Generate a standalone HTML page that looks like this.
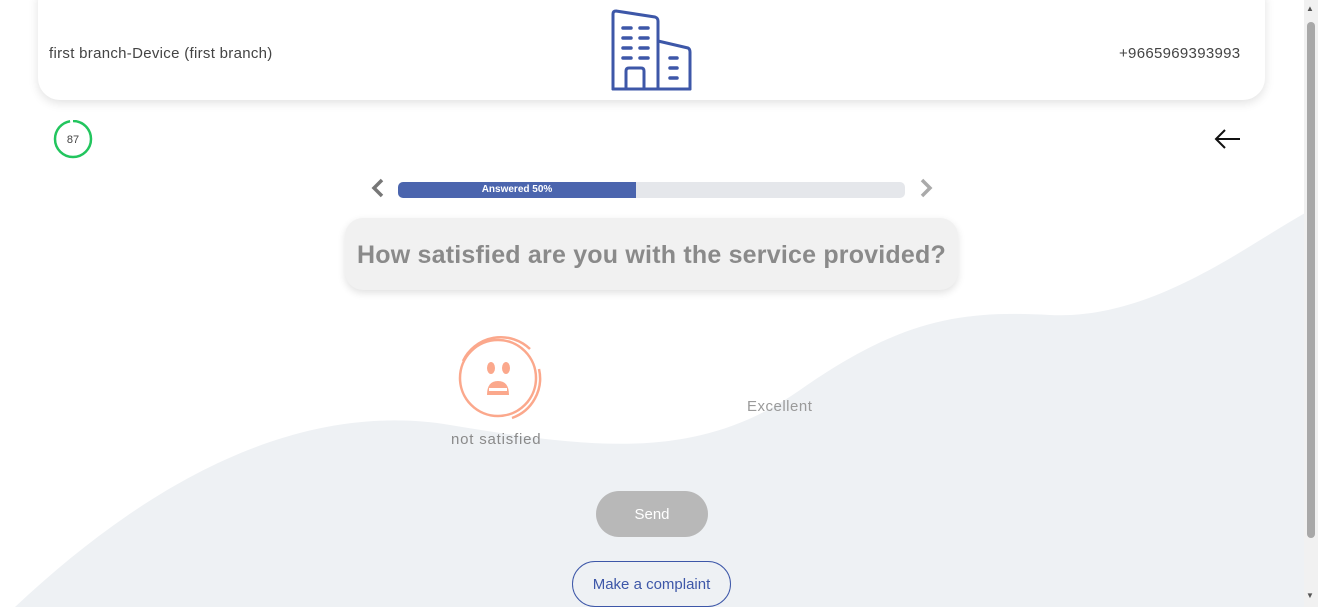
<!DOCTYPE html>
<html><head><style>
body{margin:0;width:1318px;height:607px;overflow:hidden;background:#fff;font-family:"Liberation Sans",sans-serif;position:relative}
.abs{position:absolute}
</style></head><body>
<svg class="abs" style="left:0;top:0" width="1305" height="607">
<path d="M15,607 C150,480 300,400 450,425 C600,450 700,460 800,390 C900,320 960,310 1050,315 C1150,320 1240,250 1305,213 L1305,607 Z" fill="#eef1f4"/>
</svg>
<div class="abs" style="left:38px;top:-20px;width:1227px;height:120px;background:#fff;border-radius:22px;box-shadow:0 3px 10px rgba(0,0,0,.12)"></div>
<div class="abs" style="left:49px;top:45px;font-size:15px;color:#444;letter-spacing:0.3px">first branch-Device (first branch)</div>
<div class="abs" style="left:1119px;top:45px;font-size:15px;color:#444;letter-spacing:0.3px">+9665969393993</div>
<svg class="abs" style="left:0;top:0" width="700" height="100" fill="none" stroke="#3d57a8" stroke-width="3" stroke-linecap="round" stroke-linejoin="round">
<path d="M613,89 V14 Q613,11 616,11 L655,17 Q658,18 658,21 V89"/>
<path d="M658,41 L688,48 Q690,49 690,52 V89"/>
<path d="M613,89 H690"/>
<path d="M626,89 V71 Q626,68 629,68 H641 Q644,68 644,71 V89"/>
<path d="M623,28h8M640,28h8M623,38h8M640,38h8M623,48h8M640,48h8M623,58h8M640,58h8M670,58h7M670,68h7M670,78h7" stroke-width="3.5"/>
</svg>
<svg class="abs" style="left:53px;top:120px" width="40" height="40"><circle cx="20" cy="19" r="18" fill="none" stroke="#22c55e" stroke-width="2.5" stroke-dasharray="110 5" transform="rotate(-90 20 19)"/><text x="20" y="23" font-size="11" text-anchor="middle" fill="#444" font-family="Liberation Sans">87</text></svg>
<svg class="abs" style="left:1214px;top:128px" width="28" height="22" fill="none" stroke="#111" stroke-width="2"><path d="M2,11 H26 M11,2 L2,11 L11,20"/></svg>
<svg class="abs" style="left:368px;top:177px" width="20" height="22" fill="none" stroke="#777" stroke-width="3.5"><path d="M14,3 L6,11 L14,19"/></svg>
<svg class="abs" style="left:916px;top:177px" width="20" height="22" fill="none" stroke="#aaa" stroke-width="3.5"><path d="M6,3 L14,11 L6,19"/></svg>
<div class="abs" style="left:398px;top:182px;width:507px;height:16px;background:#e5e7eb;border-radius:5px;overflow:hidden"><div style="width:238px;height:16px;background:#4b65ae;color:#fff;font-size:10px;line-height:16px;text-align:center;font-weight:bold">Answered 50%</div></div>
<div class="abs" style="left:345px;top:218px;width:613px;height:72px;background:#f1f1f1;border-radius:18px;box-shadow:0 3px 8px rgba(0,0,0,.12);text-align:center;line-height:74px;font-size:25px;color:#8a8a8a;font-weight:bold;letter-spacing:0.2px">How satisfied are you with the service provided?</div>
<svg class="abs" style="left:452px;top:331px" width="94" height="94" fill="none" stroke="#fba88c" stroke-width="2.5"><circle cx="46" cy="47" r="38"/><path d="M11,30 A42,42 0 0 1 78,18 M87,38 A42,42 0 0 1 60,87"/><ellipse cx="39" cy="37" rx="4" ry="6" fill="#fba88c" stroke="none"/><ellipse cx="54" cy="37" rx="4" ry="6" fill="#fba88c" stroke="none"/><path d="M35,64 Q35,50 46,50 Q57,50 57,64 Z" fill="#fba88c" stroke="none"/><rect x="37" y="57" width="18" height="3" fill="#fff" stroke="none"/></svg>
<div class="abs" style="left:451px;top:431px;font-size:15px;color:#8a8a8a;letter-spacing:0.8px">not satisfied</div>
<div class="abs" style="left:747px;top:398px;font-size:15px;color:#9a9a9a;letter-spacing:0.5px">Excellent</div>
<div class="abs" style="left:596px;top:491px;width:112px;height:46px;background:#b8b8b8;border-radius:23px;color:#fff;font-size:15px;text-align:center;line-height:47px">Send</div>
<div class="abs" style="left:572px;top:561px;width:157px;height:44px;border:1px solid #3d57a8;border-radius:23px;color:#3d57a8;font-size:15px;text-align:center;line-height:46px;background:#eef1f4">Make a complaint</div>
<div class="abs" style="left:1304px;top:0;width:14px;height:607px;background:#f1f1f1"></div>
<div class="abs" style="left:1307px;top:22px;width:8px;height:516px;background:#a8a8a8;border-radius:4px"></div>
<div class="abs" style="left:1306px;top:4px;font-size:8px;color:#555">▲</div>
<div class="abs" style="left:1306px;top:591px;font-size:8px;color:#555">▼</div>
</body></html>
